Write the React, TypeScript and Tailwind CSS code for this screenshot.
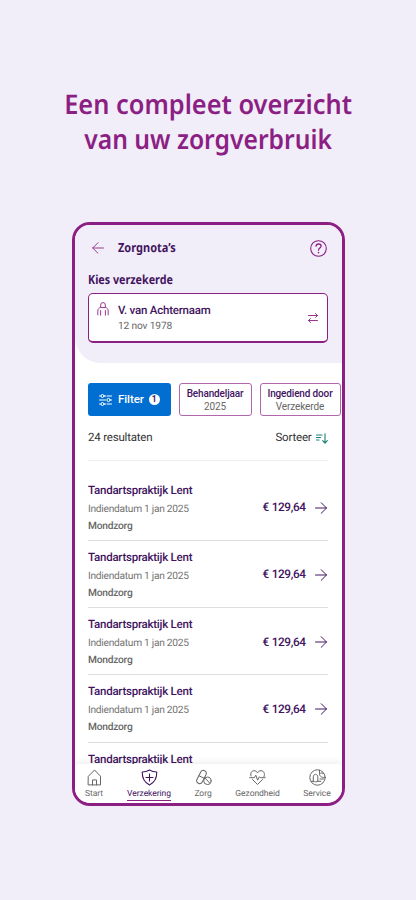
import type { ReactNode } from 'react'

interface IconProps {
  className?: string
  viewBox: string
  strokeWidth?: number
  children: ReactNode
}

interface Claim {
  id: number
  provider: string
  submitted: string
  category: string
  amount: string
}

const claims: Claim[] = Array.from({ length: 4 }, (_, i) => ({
  id: i,
  provider: 'Tandartspraktijk Lent',
  submitted: 'Indiendatum 1 jan 2025',
  category: 'Mondzorg',
  amount: '€ 129,64',
}))

function Icon({ className, viewBox, strokeWidth = 1, children }: IconProps) {
  return (
    <svg
      className={className}
      viewBox={viewBox}
      fill="none"
      stroke="currentColor"
      strokeWidth={strokeWidth}
      strokeLinecap="round"
      strokeLinejoin="round"
      aria-hidden="true"
    >
      {children}
    </svg>
  )
}

function Header() {
  return (
    <header className="h-[138px] shrink-0 rounded-bl-[26px] bg-[#f2eef9] pr-[14px] pl-[13px]">
      <div className="flex h-[46px] items-center">
        <Icon className="ml-[4px] h-3 w-3 text-[#9a3b94]" viewBox="0 0 12 12">
          <path d="M11.5 6H.7M6 .7.7 6 6 11.3" />
        </Icon>
        <h2 className="ml-[14px] origin-left scale-x-[0.88] font-['Noto_Sans',sans-serif] text-[12.5px] font-bold text-[#42145f]">
          Zorgnota’s
        </h2>
        <Icon className="mr-[1px] ml-auto h-[17px] w-[17px] text-[#8c1f84]" viewBox="0 0 17 17" strokeWidth={1.1}>
          <circle cx="8.5" cy="8.5" r="7.8" />
          <path d="M6 6.2c.2-1.5 1.2-2.2 2.6-2.2 1.5 0 2.5.8 2.5 2.1 0 2-2.6 2-2.6 4.1" strokeWidth="1.3" />
          <path d="M8.5 12.6v.2" strokeWidth="1.5" />
        </Icon>
      </div>
      <h3 className="flex h-[22px] origin-left scale-x-[0.86] items-center pb-[4px] font-['Noto_Sans',sans-serif] text-[12.5px] font-bold text-[#42145f]">
        Kies verzekerde
      </h3>
      <div className="flex h-[50px] rounded-[5px] border border-b-2 border-[#8c1f84] bg-white">
        <Icon className="mt-[8px] ml-[8px] h-[14px] w-[12px] text-[#9a3b94]" viewBox="0 0 12 14">
          <path d="M3.7 5.2V3A2.3 2.3 0 0 1 6 .6 2.3 2.3 0 0 1 8.3 3v2.2zM3.7 5.2C1.7 5.9.8 7.2.8 9v3.8M8.3 5.2c2 .7 2.9 2 2.9 3.8v3.8M3.6 8.5v4.7M8.4 8.5v4.7" />
        </Icon>
        <div className="ml-[9.5px] pt-[8px]">
          <p className="text-[11.5px] leading-[16px] font-medium tracking-[-0.22px] text-[#42145f]">V. van Achternaam</p>
          <p className="pt-px text-[10.2px] leading-[16px] tracking-[-0.15px] text-[#666]">12 nov 1978</p>
        </div>
        <Icon className="mt-[19px] mr-[9px] ml-auto h-[10px] w-[10px] text-[#8c1f84]" viewBox="0 0 10 10" strokeWidth={0.9}>
          <path d="M.5 2.5h9M7.5.5l2 2-2 2M9.5 7.5h-9M2.5 5.5l-2 2 2 2" />
        </Icon>
      </div>
    </header>
  )
}

function Filters() {
  return (
    <div className="mt-[20px] flex h-[33px] shrink-0 gap-2 pl-[13px]">
      <button className="flex w-[83px] shrink-0 items-center rounded-[3px] bg-[#006fd1] pl-[11px] text-white">
        <Icon className="h-3 w-[13px]" viewBox="0 0 13 12" strokeWidth={1}>
          <path d="M.5 2h1M5.5 2h1.2M.5 6h6M.5 10h1M5.5 10h1.2M8 2h4.5M11.5 6h1M8 10h4.5" />
          <circle cx="3.5" cy="2" r="1.5" />
          <circle cx="3.5" cy="10" r="1.5" />
          <circle cx="9.5" cy="6" r="1.6" />
        </Icon>
        <span className="ml-[6.5px] text-[11.5px] font-medium tracking-[-0.1px]">Filter</span>
        <span className="ml-[5px] flex h-[11px] w-[11px] items-center justify-center rounded-full bg-white text-[8.5px] font-bold text-[#42145f]">
          1
        </span>
      </button>
      <button className="w-[73px] shrink-0 rounded-[3px] border border-[#b266ad] pt-[1px] text-[10px] leading-[13.5px]">
        <span className="block font-medium tracking-[-0.15px] text-[#42145f]">Behandeljaar</span>
        <span className="block tracking-[-0.1px] text-[#666]">2025</span>
      </button>
      <button className="w-[81px] shrink-0 rounded-[3px] border border-[#b266ad] pt-[1px] text-[10px] leading-[13.5px]">
        <span className="block font-medium tracking-[-0.15px] whitespace-nowrap text-[#42145f]">Ingediend door</span>
        <span className="block tracking-[-0.1px] text-[#666]">Verzekerde</span>
      </button>
    </div>
  )
}

function ClaimRow({ claim }: { claim: Claim }) {
  return (
    <li className="flex h-[67.15px] shrink-0 items-center justify-between border-b border-[#dedede]">
      <div className="self-start pt-[8px] pl-[0.5px]">
        <p className="pb-[2px] text-[11.5px] leading-[17px] font-medium tracking-[-0.24px] text-[#42145f]">{claim.provider}</p>
        <p className="text-[10.2px] leading-[17px] tracking-[-0.27px] text-[#737373]">{claim.submitted}</p>
        <p className="text-[10.2px] leading-[17px] font-medium tracking-[-0.22px] text-[#666]">{claim.category}</p>
      </div>
      <div className="flex items-center pt-[2px]">
        <span className="text-[11.8px] font-medium tracking-[-0.4px] [word-spacing:0.5px] text-[#42145f]">{claim.amount}</span>
        <Icon className="mr-[1px] ml-[9px] h-3 w-3 text-[#42145f]" viewBox="0 0 12 12">
          <path d="M.5 6h11M6.2.7 11.5 6l-5.3 5.3" />
        </Icon>
      </div>
    </li>
  )
}

function BottomNav() {
  return (
    <nav className="relative mt-auto flex h-[39px] shrink-0 rounded-t-[4px] bg-white text-[8.5px] leading-[12px] tracking-[-0.05px] text-[#666] shadow-[0_-2px_6px_rgba(0,0,0,0.07)]">
      <div className="flex w-[39px] flex-col items-center pt-[5px]">
        <Icon className="h-[17px] w-[17px]" viewBox="0 0 17 17">
          <path d="M2.5 7.2 8.5 1l6 6.2v8.7h-12zM6.5 15.9v-5h4v5" />
        </Icon>
        <span className="mt-[1.5px]">Start</span>
      </div>
      <div className="flex w-[71px] flex-col items-center pt-[5px] text-[#42145f]">
        <Icon className="h-[17px] w-[17px]" viewBox="0 0 17 17" strokeWidth={1.1}>
          <path d="M8.5 1C6.3 2.4 3.8 3 1.2 3c0 5.7 1.7 10.3 7.3 12.9 5.6-2.6 7.3-7.2 7.3-12.9-2.6 0-5.1-.6-7.3-2zM8.5 5v7M5 8.5h7" />
        </Icon>
        <span className="mt-[1.5px] h-[13px] border-b border-[#8c1f84]">Verzekering</span>
      </div>
      <div className="flex w-[37px] flex-col items-center pt-[5px]">
        <Icon className="h-[17px] w-[17px]" viewBox="0 0 17 17">
          <rect x="3.6" y="1" width="5.8" height="14" rx="2.9" transform="rotate(27 6.5 8)" />
          <path d="M4.1 6.8 9.3 9.3" />
          <circle cx="12.4" cy="11.8" r="3.7" fill="white" />
          <path d="M10.2 9.2l4.6 5" />
        </Icon>
        <span className="mt-[1.5px]">Zorg</span>
      </div>
      <div className="flex w-[72px] flex-col items-center pt-[5px]">
        <Icon className="h-[17px] w-[17px]" viewBox="0 0 17 17">
          <path d="M2 7C.9 3.7 3 1.7 5 1.7c1.6 0 2.7.8 3.5 2.1.8-1.3 1.9-2.1 3.5-2.1 2.6 0 4.4 2.7 3 6M3.5 10.5l5 5 5-5M.7 8.7h4.6l1.5-2.5 1.8 5 1.7-3.5 1 1h4.9" />
        </Icon>
        <span className="mt-[1.5px]">Gezondheid</span>
      </div>
      <div className="flex w-[47px] flex-col items-center pt-[5px]">
        <Icon className="h-[17px] w-[17px]" viewBox="0 0 17 17">
          <circle cx="8.5" cy="8.5" r="7.7" />
          <path d="M2.2 12.3h2.1V7.8c0-3.2 4.5-3.2 4.5 0v4.5h3M4.3 12.3c1.2.8 3.3.8 4.5 0M10.5 1.2v3.5c0 3 3 4.5 5.5 3.5M10.5 5c1.3-1.5 3.3-1.5 4.5 0M11 10h3.5" />
        </Icon>
        <span className="mt-[1.5px]">Service</span>
      </div>
    </nav>
  )
}

export default function App() {
  return (
    <main className="flex h-[900px] w-[416px] flex-col items-center overflow-hidden bg-[#f2eef9] font-[Roboto,sans-serif] [text-rendering:geometricPrecision]">
      <h1 className="mt-[87px] text-center font-['Noto_Sans',sans-serif] text-[27px] leading-[34.5px] font-semibold whitespace-nowrap text-[#8c1f84]">
        <span className="block scale-x-[0.94]">Een compleet overzicht</span>
        <span className="block scale-x-[0.913]">van uw zorgverbruik</span>
      </h1>
      <section className="mt-[66px] flex h-[584px] w-[273px] flex-col overflow-hidden rounded-[18px] border-[3px] border-[#8c1f84] bg-white">
        <Header />
        <Filters />
        <div className="mt-[9px] mr-[14px] ml-[13px] flex h-[26px] shrink-0 items-center justify-between text-[11.5px] tracking-[-0.2px] text-[#333]">
          <span className="pl-[0.5px]">24 resultaten</span>
          <span className="flex items-center gap-[4px]">
            Sorteer
            <Icon className="h-[11px] w-3 text-[#178078]" viewBox="0 0 12 11" strokeWidth={1.1}>
              <path d="M.5 2h5.5M.5 4.5h4M.5 7h2.5M9 .7v9.5M6.7 7.7 9 10.2l2.3-2.5" />
            </Icon>
          </span>
        </div>
        <div className="mt-[9px] mr-[14px] ml-[13px] h-px shrink-0 bg-[#eee]" />
        <ul className="mt-[13px] mr-[14px] ml-[13px] flex shrink-0 flex-col">
          {claims.map((claim) => (
            <ClaimRow key={claim.id} claim={claim} />
          ))}
          {/* next claim peeks out above the tab bar */}
          <li className="-mb-[10px] pt-[8px] pl-[0.5px] text-[11.5px] leading-[17px] font-medium tracking-[-0.24px] text-[#42145f]">
            Tandartspraktijk Lent
          </li>
        </ul>
        <BottomNav />
      </section>
    </main>
  )
}
